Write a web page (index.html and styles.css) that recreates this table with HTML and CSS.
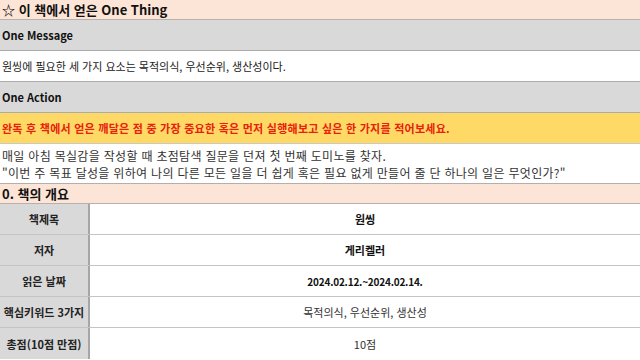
FILE: index.html
```html
<!DOCTYPE html>
<html lang="ko">
<head>
    <meta charset="UTF-8">
    <meta name="viewport" content="width=device-width, initial-scale=1.0">
    <title>One Thing</title>
    <link rel="stylesheet" href="styles.css">
</head>
<body>
    <div id="sheet">
        <div class="title-row">☆ 이 책에서 얻은 One Thing</div>

        <div class="label-row">One Message</div>
        <div class="text-row">원씽에 필요한 세 가지 요소는 목적의식, 우선순위, 생산성이다.</div>

        <div class="label-row">One Action</div>
        <div class="notice-row">완독 후 책에서 얻은 깨달은 점 중 가장 중요한 혹은 먼저 실행해보고 싶은 한 가지를 적어보세요.</div>
        <div class="action-row">
            <p>매일 아침 목실감을 작성할 때 초점탐색 질문을 던져 첫 번째 도미노를 찾자.</p>
            <p>"이번 주 목표 달성을 위하여 나의 다른 모든 일을 더 쉽게 혹은 필요 없게 만들어 줄 단 하나의 일은 무엇인가?"</p>
        </div>

        <div class="title-row section">0. 책의 개요</div>

        <div class="info-row">
            <div class="info-key">책제목</div>
            <div class="info-value bold">원씽</div>
        </div>
        <div class="info-row">
            <div class="info-key">저자</div>
            <div class="info-value bold">게리켈러</div>
        </div>
        <div class="info-row">
            <div class="info-key">읽은 날짜</div>
            <div class="info-value bold date">2024.02.12.~2024.02.14.</div>
        </div>
        <div class="info-row">
            <div class="info-key">핵심키워드 3가지</div>
            <div class="info-value">목적의식, 우선순위, 생산성</div>
        </div>
        <div class="info-row last">
            <div class="info-key">총점(10점 만점)</div>
            <div class="info-value">10점</div>
        </div>
    </div>
</body>
</html>
```

FILE: styles.css
```css
 body {
     margin: 0;
     padding: 0;
     background: #ffffff;
     color: #222;
     font-family: "Noto Sans CJK KR", sans-serif;
     font-size: 11px;
 }

 #sheet {
     display: flex;
     flex-direction: column;
     width: 640px;
 }

 .title-row {
     box-sizing: border-box;
     height: 20px;
     display: flex;
     align-items: center;
     padding-left: 2px;
     background: #fce4d6;
     border-bottom: 1px solid #b8b0ac;
     font-size: 13px;
     font-weight: bold;
     color: #111;
 }

 .title-row.section {
     height: 21px;
     border-top: 1px solid #b0b0b0;
 }

 .label-row,
 .text-row,
 .notice-row {
     box-sizing: border-box;
     height: 31px;
     display: flex;
     align-items: center;
     padding-left: 2px;
     border-bottom: 1px solid #ababab;
 }

 .label-row {
     background: #d9d9d9;
     font-weight: bold;
     color: #111;
 }

 .notice-row {
     background: #ffd966;
     color: #e8200c;
     font-weight: bold;
     letter-spacing: 0.25px;
     border-bottom: 1px solid #c8c8c8;
 }

 .action-row {
     box-sizing: border-box;
     height: 39px;
     padding: 3px 0 0 2px;
     font-size: 12px;
     letter-spacing: 0.3px;
     color: #333;
 }

 .action-row p {
     margin: 0;
     line-height: 17px;
 }

 .info-row {
     box-sizing: border-box;
     height: 31px;
     display: flex;
     border-bottom: 1px solid #c4c4c4;
 }

 .info-row.last {
     border-bottom: none;
 }

 .info-key {
     width: 88px;
     flex-shrink: 0;
     display: flex;
     align-items: center;
     justify-content: center;
     background: #d9d9d9;
     border-right: 2px solid #a6a6a6;
     font-weight: bold;
     color: #222;
 }

 .info-value {
     flex-grow: 1;
     display: flex;
     align-items: center;
     justify-content: center;
     color: #333;
 }

 .info-value.bold {
     font-weight: bold;
     color: #111;
 }

 .info-value.date {
     font-size: 10px;
     letter-spacing: -0.2px;
 }
```
